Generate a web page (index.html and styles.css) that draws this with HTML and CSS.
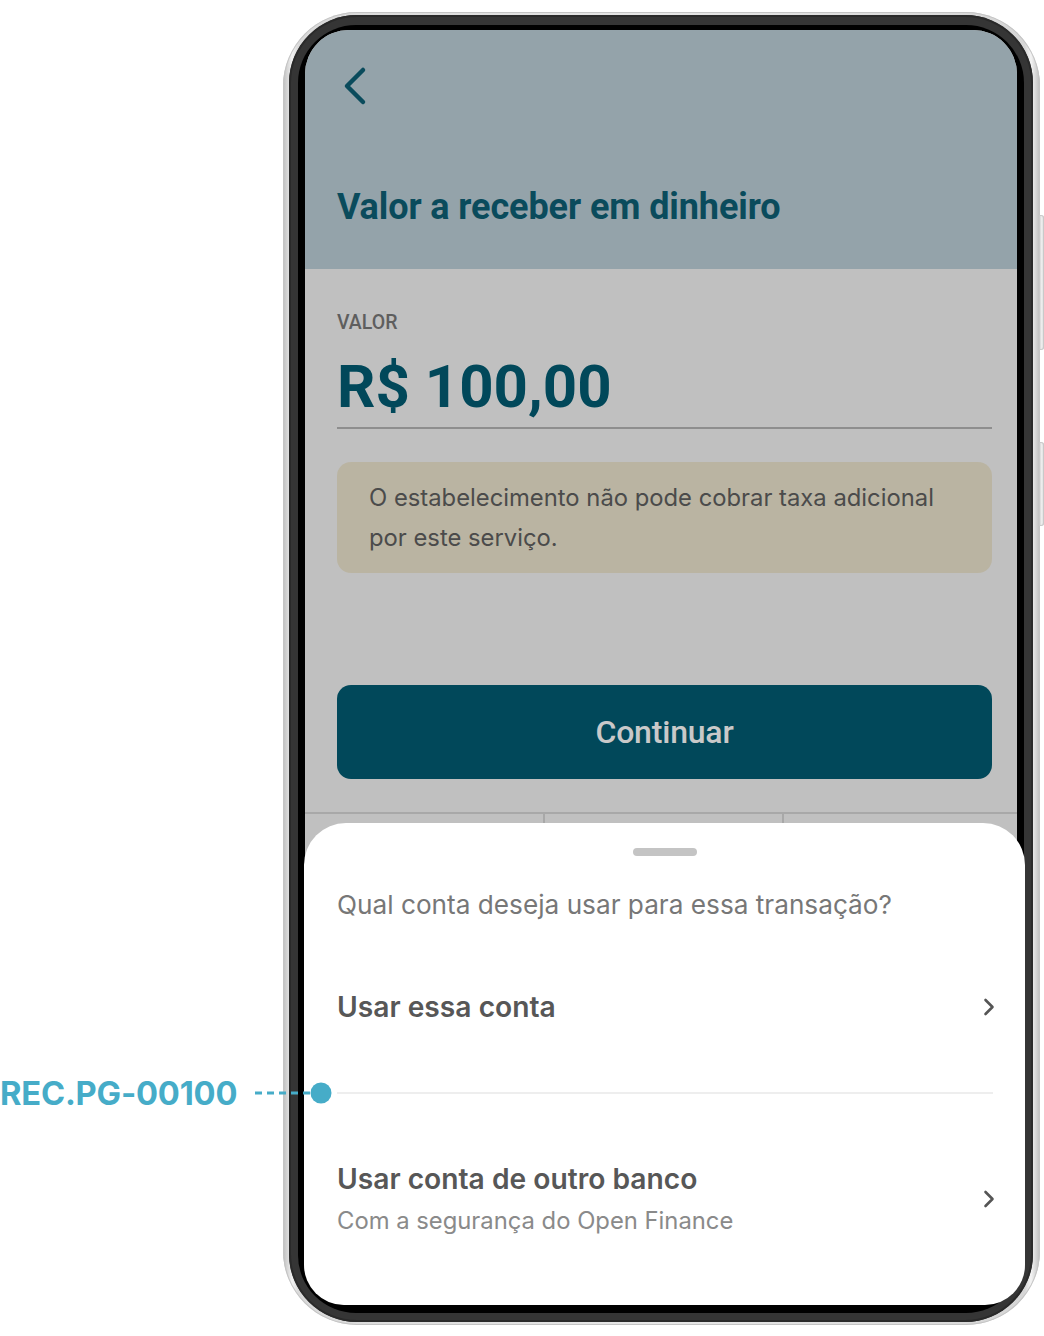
FILE: index.html
```html
<!DOCTYPE html>
<html lang="pt-BR">
<head>
<meta charset="utf-8">
<title>Valor a receber em dinheiro</title>
<link rel="stylesheet" href="styles.css">
</head>
<body>
<div class="stage">
  <div class="phone">
    <span class="side-btn side-btn-1"></span>
    <span class="side-btn side-btn-2"></span>
    <div class="bezel">
      <div class="bezel-inner">
        <div class="screen">
          <header class="header">
            <svg class="back" viewBox="0 0 24 40" width="24" height="40" aria-hidden="true">
              <path d="M20 4 L4 20 L20 36" fill="none" stroke="#0a4b5c" stroke-width="4.5" stroke-linecap="round" stroke-linejoin="round"/>
            </svg>
            <h1 class="title">Valor a receber em dinheiro</h1>
          </header>
          <main class="content">
            <div class="label">VALOR</div>
            <div class="amount">R$ 100,00</div>
            <div class="notice">O estabelecimento não pode cobrar taxa adicional por este serviço.</div>
            <button class="btn">Continuar</button>
          </main>
          <div class="tabbar">
            <div class="tab"></div>
            <div class="tab"></div>
            <div class="tab"></div>
          </div>
          <section class="sheet">
            <div class="handle"></div>
            <p class="question">Qual conta deseja usar para essa transação?</p>
            <div class="row row-1">
              <div class="row-text">
                <div class="row-title">Usar essa conta</div>
              </div>
              <svg class="chev" viewBox="0 0 12 18" width="12" height="18" aria-hidden="true">
                <path d="M2.5 2 L9.5 9 L2.5 16" fill="none" stroke="#555" stroke-width="2.6" stroke-linecap="round" stroke-linejoin="round"/>
              </svg>
            </div>
            <div class="divider"></div>
            <div class="row row-2">
              <div class="row-text">
                <div class="row-title">Usar conta de outro banco</div>
                <div class="row-sub">Com a segurança do Open Finance</div>
              </div>
              <svg class="chev" viewBox="0 0 12 18" width="12" height="18" aria-hidden="true">
                <path d="M2.5 2 L9.5 9 L2.5 16" fill="none" stroke="#555" stroke-width="2.6" stroke-linecap="round" stroke-linejoin="round"/>
              </svg>
            </div>
          </section>
        </div>
      </div>
    </div>
  </div>

  <div class="annotation">
    <span class="annotation-label">REC.PG-00100</span>
    <svg class="annotation-pin" viewBox="0 0 80 24" width="80" height="24" aria-hidden="true">
      <line x1="0" y1="12" x2="60" y2="12" stroke="#46acc8" stroke-width="3" stroke-dasharray="7 5"/>
      <circle cx="66" cy="12" r="10.5" fill="#46acc8"/>
    </svg>
  </div>
</div>
</body>
</html>
```

FILE: styles.css
```css
* {
  box-sizing: border-box;
}

html, body {
  margin: 0;
  padding: 0;
  background: #ffffff;
}

body {
  width: 1044px;
  height: 1336px;
  overflow: hidden;
  font-family: "Inter", "Noto Sans", sans-serif;
}

.stage {
  position: relative;
  width: 1044px;
  height: 1336px;
  padding: 12px 0 0 283px;
}

/* ---------- phone frame ---------- */
.phone {
  position: relative;
  width: 757px;
  height: 1313px;
  border-radius: 74px;
  padding: 3px 7px 3px 6px;
  background: linear-gradient(90deg, #bdbdbd 0%, #f2f2f2 1.2%, #d9d9d9 2%, #e6e6e6 50%, #d6d6d6 98%, #f4f4f4 98.8%, #bcbcbc 100%);
  box-shadow: inset 0 0 0 1px #c4c4c4;
}

.side-btn {
  position: absolute;
  right: -4px;
  width: 5px;
  border-radius: 0 3px 3px 0;
  background: linear-gradient(90deg, #c8c8c8, #f4f4f4 60%, #bdbdbd);
  box-shadow: inset 0 0 0 1px #c9c9c9;
}

.side-btn-1 {
  top: 203px;
  height: 135px;
}

.side-btn-2 {
  top: 430px;
  height: 84px;
}

.bezel {
  height: 100%;
  border-radius: 68px;
  padding: 10px 9px 9px 9px;
  background: #353535;
  box-shadow: inset 0 0 0 2px #2a2a2a;
}

.bezel-inner {
  height: 100%;
  border-radius: 58px;
  padding: 5px 7px 8px 7px;
  background: #000000;
}

/* ---------- screen ---------- */
.screen {
  position: relative;
  display: flex;
  flex-direction: column;
  height: 100%;
  border-radius: 44px;
  background: #c0c0c0;
}

.header {
  display: flex;
  flex-direction: column;
  height: 239px;
  padding: 36px 0 0 38px;
  background: #94a3aa;
  border-radius: 44px 44px 0 0;
}

.back {
  display: block;
}

.title {
  margin: 81px 0 0 -6px;
  font-family: "Roboto", "Liberation Sans", sans-serif;
  font-weight: 700;
  font-size: 36px;
  line-height: 40px;
  color: #0a4b5c;
  letter-spacing: -0.1px;
}

.content {
  display: flex;
  flex-direction: column;
  padding: 0 25px 0 32px;
}

.label {
  margin-top: 42px;
  font-family: "Roboto", "Liberation Sans", sans-serif;
  font-weight: 500;
  font-size: 19.5px;
  line-height: 24px;
  color: #5e5e5e;
}

.amount {
  margin-top: 17px;
  padding-bottom: 5px;
  border-bottom: 2px solid #8e8e8e;
  font-family: "Roboto", "Liberation Sans", sans-serif;
  font-weight: 700;
  font-size: 60px;
  line-height: 70px;
  color: #01485a;
}

.notice {
  margin-top: 33px;
  height: 111px;
  padding: 16px 48px 15px 32px;
  border-radius: 14px;
  background: #bab4a2;
  font-size: 23.8px;
  line-height: 40px;
  color: #4b4b4b;
}

.btn {
  margin-top: 112px;
  height: 94px;
  border: 0;
  border-radius: 14px;
  background: #01485a;
  font-family: "Roboto", "Liberation Sans", sans-serif;
  font-weight: 500;
  font-size: 32px;
  color: #c9c9c9;
  letter-spacing: -0.2px;
}

.tabbar {
  display: flex;
  margin-top: 33px;
  height: 40px;
  border-top: 2px solid #a8a8a8;
}

.tab {
  flex: 238;
  border-right: 2px solid #a8a8a8;
}

.tab:last-child {
  border-right: 0;
  flex: 233;
}

/* ---------- bottom sheet ---------- */
.sheet {
  position: absolute;
  top: 793px;
  left: -1px;
  right: -8px;
  bottom: 0;
  display: flex;
  flex-direction: column;
  padding: 25px 32px 0 33px;
  background: #ffffff;
  border-radius: 42px 42px 40px 40px;
}

.handle {
  align-self: center;
  width: 64px;
  height: 8px;
  border-radius: 4px;
  background: #c4c4c4;
}

.question {
  margin: 33px 0 0;
  font-size: 26.2px;
  line-height: 32px;
  color: #777777;
}

.row {
  display: flex;
  align-items: center;
  justify-content: space-between;
}

.row-1 {
  height: 171px;
}

.row-2 {
  height: 210px;
}

.row-title {
  font-size: 28.2px;
  font-weight: 600;
  line-height: 32px;
  color: #575757;
}

.row-sub {
  margin-top: 11px;
  font-size: 23.8px;
  line-height: 30px;
  color: #8a8a8a;
}

.chev {
  display: block;
  flex: none;
  margin-right: -2px;
}

.divider {
  height: 2px;
  background: #eeeeee;
}

/* ---------- annotation ---------- */
.annotation {
  position: absolute;
  left: 0;
  top: 1076px;
  display: flex;
  align-items: center;
  height: 34px;
}

.annotation-label {
  font-family: "Inter", "Noto Sans", sans-serif;
  font-weight: 700;
  font-size: 32.7px;
  line-height: 34px;
  color: #46acc8;
  letter-spacing: -0.2px;
}

.annotation-pin {
  display: block;
  margin-left: 18px;
}
```
